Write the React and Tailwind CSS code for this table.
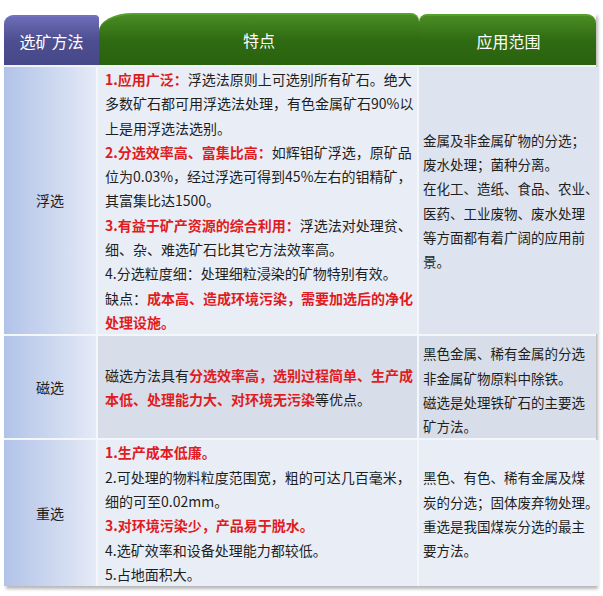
const font = { fontFamily: '"Noto Sans CJK SC", "Noto Sans", sans-serif' };

function R({ children }) {
  return <span className="font-bold text-[#e01b22]">{children}</span>;
}

function Lines({ lines, className = "" }) {
  return (
    <div className={className}>
      {lines.map((l, i) => (
        <div key={i} className="whitespace-nowrap h-[24.3px] leading-[24.3px]">
          {l}
        </div>
      ))}
    </div>
  );
}

const rows = [
  {
    label: "浮选",
    midBg: "bg-[#e9eef6]",
    rightBg: "bg-[#dee4ef]",
    mid: [
      <><R>1.应用广泛：</R>浮选法原则上可选别所有矿石。绝大</>,
      "多数矿石都可用浮选法处理，有色金属矿石90%以",
      "上是用浮选法选别。",
      <><R>2.分选效率高、富集比高：</R>如辉钼矿浮选，原矿品</>,
      "位为0.03%，经过浮选可得到45%左右的钼精矿，",
      "其富集比达1500。",
      <><R>3.有益于矿产资源的综合利用：</R>浮选法对处理贫、</>,
      "细、杂、难选矿石比其它方法效率高。",
      "4.分选粒度细：处理细粒浸染的矿物特别有效。",
      <>缺点：<R>成本高、造成环境污染，需要加选后的净化</R></>,
      <R>处理设施。</R>,
    ],
    right: [
      "金属及非金属矿物的分选；",
      "废水处理；菌种分离。",
      "在化工、造纸、食品、农业、",
      "医药、工业废物、废水处理",
      "等方面都有着广阔的应用前",
      "景。",
    ],
    rightPad: "pt-[0px]",
  },
  {
    label: "磁选",
    midBg: "bg-[#d8dee9]",
    rightBg: "bg-[#d8dee9]",
    mid: [
      <>磁选方法具有<R>分选效率高，选别过程简单、生产成</R></>,
      <><R>本低、处理能力大、对环境无污染</R>等优点。</>,
    ],
    right: [
      "黑色金属、稀有金属的分选",
      "非金属矿物原料中除铁。",
      "磁选是处理铁矿石的主要选",
      "矿方法。",
    ],
    rightPad: "pt-[5px]",
  },
  {
    label: "重选",
    midBg: "bg-[#e9eef6]",
    rightBg: "bg-[#e9eef6]",
    mid: [
      <R>1.生产成本低廉。</R>,
      "2.可处理的物料粒度范围宽，粗的可达几百毫米，",
      "细的可至0.02mm。",
      <R>3.对环境污染少，产品易于脱水。</R>,
      "4.选矿效率和设备处理能力都较低。",
      "5.占地面积大。",
    ],
    right: [
      "黑色、有色、稀有金属及煤",
      "炭的分选；固体废弃物处理。",
      "重选是我国煤炭分选的最主",
      "要方法。",
    ],
    rightPad: "pt-[25px]",
  },
];

export default function App() {
  return (
    <div className="w-[603px] h-[596px] bg-white pt-[13px] pl-[4px]" style={font}>
      <div className="w-[592px] shadow-[2px_3px_3px_rgba(0,0,0,0.28)]">
        <div className="flex items-end h-[52px]">
          <div className="w-[95px] h-[50px] rounded-tl-[9px] rounded-tr-[4px] bg-linear-to-b from-[#6b6cb6] via-[#4d4e8f] to-[#47488a] border-t-2 border-[#7073c4] flex items-center justify-center text-white text-[16px]">
            选矿方法
          </div>
          <div className="w-[320px] h-[52px] rounded-tl-[34px_18px] rounded-tr-[8px] bg-linear-to-b from-[#4a8c24] via-[#2f6b12] to-[#2a620e] border-t-2 border-[#58a02c] flex items-center justify-center text-white text-[16px]">
            特点
          </div>
          <div className="w-[177px] h-[51px] rounded-tl-[8px] rounded-tr-[9px] bg-linear-to-b from-[#4a8c24] via-[#2f6b12] to-[#2a620e] border-t-2 border-[#58a02c] flex items-center justify-center text-white text-[16px] pl-[2px]">
            应用范围
          </div>
        </div>
        <div className="h-[2px] bg-[#eef2f9]" />
        {rows.map((row, i) => (
          <div
            key={i}
            className={`flex text-[#1e1e1e] ${i > 0 ? "border-t-2 border-[#f3f6fb]" : ""}`}
          >
            <div className="w-[94px] shrink-0 bg-linear-to-r from-[#b2c3e8] to-[#e4eaf6] border-r-2 border-[#f3f6fb] flex items-center justify-center text-[14px]">
              {row.label}
            </div>
            <div className={`w-[321px] shrink-0 ${row.midBg} border-r-2 border-[#f3f6fb] pl-[7px] text-[14px] flex flex-col justify-center`}>
              <Lines lines={row.mid} />
            </div>
            <div className={`flex-1 ${row.rightBg} pl-[4px] text-[13.5px] ${row.rightPad} ${i === 0 ? "flex flex-col justify-center" : ""}`}>
              <Lines lines={row.right} />
            </div>
          </div>
        ))}
      </div>
    </div>
  );
}
